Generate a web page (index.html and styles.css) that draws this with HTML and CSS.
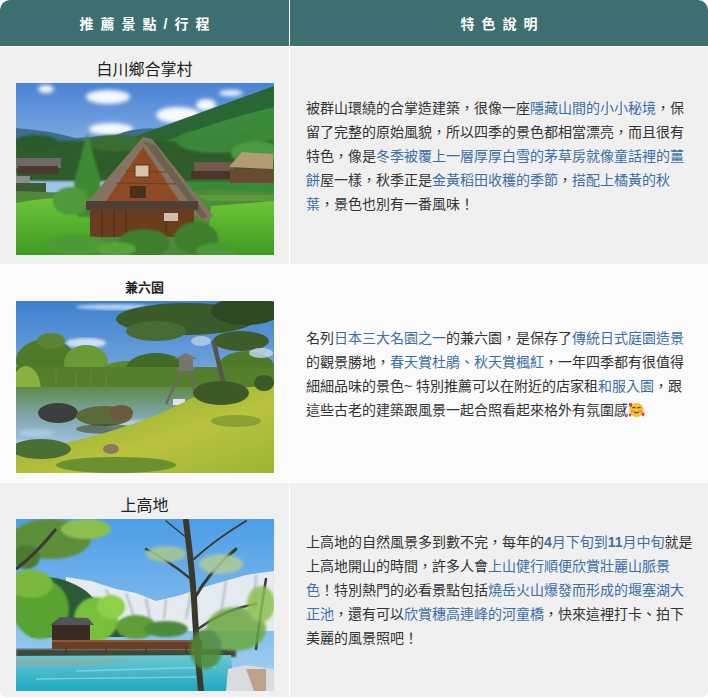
FILE: index.html
```html
<!DOCTYPE html>
<html lang="zh-Hant">
<head>
<meta charset="utf-8">
<title>推薦景點</title>
<link rel="stylesheet" href="styles.css">
</head>
<body>
<div class="table">
  <div class="head">推薦景點/行程</div>
  <div class="head">特色說明</div>

  <div class="place">
    <div class="title">白川鄉合掌村</div>
    <svg class="photo" viewBox="0 0 258 172" width="258" height="172">
      <defs>
        <linearGradient id="s1" x1="0" y1="0" x2="0" y2="1"><stop offset="0" stop-color="#4a82d4"/><stop offset="0.55" stop-color="#9cc1ea"/><stop offset="1" stop-color="#c7dcf0"/></linearGradient>
        <linearGradient id="f1" x1="0" y1="0" x2="0" y2="1"><stop offset="0" stop-color="#6cc438"/><stop offset="1" stop-color="#3f9a22"/></linearGradient>
        <filter id="bl1"><feGaussianBlur stdDeviation="2.2"/></filter>
        <filter id="bl2"><feGaussianBlur stdDeviation="0.8"/></filter>
      </defs>
      <rect width="258" height="172" fill="url(#s1)"/>
      <g fill="#fff" filter="url(#bl1)" opacity="0.95">
        <ellipse cx="92" cy="14" rx="22" ry="7"/>
        <ellipse cx="30" cy="6" rx="8" ry="4"/>
        <ellipse cx="162" cy="32" rx="22" ry="8"/>
        <ellipse cx="190" cy="22" rx="10" ry="6"/>
        <ellipse cx="95" cy="46" rx="22" ry="6"/>
        <ellipse cx="215" cy="10" rx="12" ry="3"/>
      </g>
      <path d="M0 45 Q30 47 60 55 L100 52 Q125 42 150 47 L150 90 L0 90 Z" fill="#3f6d8c"/>
      <path d="M95 62 Q170 35 258 3 L258 120 L95 120 Z" fill="#2a6634"/>
      <path d="M140 62 Q200 38 258 24 L258 120 L140 120 Z" fill="#3a8a3a"/>
      <g filter="url(#bl2)">
        <rect x="0" y="58" width="258" height="40" fill="#2f5c2c"/>
        <ellipse cx="20" cy="60" rx="22" ry="8" fill="#2b5a2b"/>
        <ellipse cx="100" cy="60" rx="30" ry="8" fill="#3a6d33"/>
        <ellipse cx="200" cy="58" rx="40" ry="12" fill="#3b8638"/>
        <ellipse cx="240" cy="70" rx="25" ry="12" fill="#4a9a40"/>
      </g>
      <g>
        <rect x="0" y="75" width="45" height="10" fill="#6f6a66"/>
        <rect x="2" y="83" width="40" height="8" fill="#4a3a30"/>
        <rect x="0" y="93" width="14" height="10" fill="#8b8c90"/>
        <rect x="0" y="100" width="30" height="18" fill="#3d5a34"/>
        <rect x="178" y="79" width="40" height="10" fill="#6e5b4c"/>
        <rect x="175" y="88" width="40" height="8" fill="#4a3528"/>
      </g>
      <path d="M0 108 L110 112 L200 106 L258 110 L258 172 L0 172 Z" fill="#4f8a3a"/>
      <path d="M0 120 Q40 112 72 116 L80 172 L0 172 Z" fill="url(#f1)"/>
      <path d="M195 123 L258 118 L258 172 L190 172 Z" fill="url(#f1)"/>
      <path d="M180 112 L258 112 L258 118 L190 118 Z" fill="#5a9a3c"/>
      <path d="M213 84 L226 69 L257 71 L257 86 Z" fill="#b39c74"/>
      <rect x="214" y="86" width="43" height="14" fill="#6a4a30"/>
      <path d="M71 50 L58 100 L62 134 L86 134 L84 95 Z" fill="#3d8a34" filter="url(#bl2)"/>
      <ellipse cx="55" cy="118" rx="18" ry="14" fill="#4f9a3a" filter="url(#bl2)"/>
      <path d="M127 54 L136 56 L197 133 L190 138 L170 128 L74 126 L66 125 Z" fill="#857461"/>
      <path d="M127 58 L139 62 L192 134 L186 136 Z" fill="#6e6051"/>
      <path d="M127 64 L90 118 L166 122 Z" fill="#8e4a24"/>
      <g stroke="#6b3618" stroke-width="0.8">
        <line x1="100" y1="100" x2="160" y2="101"/>
        <line x1="110" y1="88" x2="150" y2="89"/>
      </g>
      <rect x="119" y="82" width="14" height="12" fill="#d6c4a6" stroke="#5a3a22"/>
      <rect x="114" y="103" width="16" height="12" fill="#4a3020"/>
      <rect x="70" y="118" width="112" height="9" fill="#4e4036"/>
      <rect x="74" y="126" width="104" height="28" fill="#6b3d20"/>
      <g stroke="#4a2a14" stroke-width="0.8">
        <line x1="86" y1="127" x2="86" y2="154"/><line x1="98" y1="127" x2="98" y2="154"/><line x1="110" y1="127" x2="110" y2="154"/><line x1="150" y1="127" x2="150" y2="154"/>
      </g>
      <rect x="148" y="130" width="14" height="8" fill="#c9c2b0"/>
      <g fill="#3c7f2c" filter="url(#bl2)">
        <ellipse cx="128" cy="160" rx="26" ry="14"/>
        <ellipse cx="60" cy="162" rx="30" ry="10" fill="#4c9a34"/>
        <ellipse cx="180" cy="155" rx="22" ry="16"/>
        <ellipse cx="200" cy="168" rx="20" ry="8" fill="#4c9a34"/>
        <ellipse cx="100" cy="166" rx="20" ry="7" fill="#55a538"/>
      </g>
    </svg>
  </div>
  <div class="desc">
    <p>被群山環繞的合掌造建築，很像一座<span class="hl">隱藏山間的小小秘境</span>，保留了完整的原始風貌，所以四季的景色都相當漂亮，而且很有特色，像是<span class="hl">冬季被覆上一層厚厚白雪的茅草房就像童話裡的薑餅</span>屋一樣，秋季正是<span class="hl">金黃稻田收穫的季節</span>，<span class="hl">搭配上橘黃的秋葉</span>，景色也別有一番風味！</p>
  </div>

  <div class="place alt">
    <div class="title small">兼六園</div>
    <svg class="photo" viewBox="0 0 258 172" width="258" height="172">
      <defs>
        <linearGradient id="s2" x1="0" y1="0" x2="0" y2="1"><stop offset="0" stop-color="#3d80cf"/><stop offset="1" stop-color="#c2d9ee"/></linearGradient>
        <linearGradient id="g2" x1="0" y1="0" x2="1" y2="1"><stop offset="0" stop-color="#7fa830"/><stop offset="0.6" stop-color="#b9c23e"/><stop offset="1" stop-color="#9cb436"/></linearGradient>
        <linearGradient id="w2" x1="0" y1="0" x2="0" y2="1"><stop offset="0" stop-color="#5f8a4a"/><stop offset="0.5" stop-color="#7ea6a8"/><stop offset="1" stop-color="#9cc0dc"/></linearGradient>
        <filter id="bl3"><feGaussianBlur stdDeviation="1.5"/></filter>
        <filter id="bl4"><feGaussianBlur stdDeviation="0.7"/></filter>
      </defs>
      <rect width="258" height="172" fill="url(#s2)"/>
      <ellipse cx="70" cy="42" rx="20" ry="5" fill="#fff" opacity="0.7" filter="url(#bl3)"/>
      <ellipse cx="100" cy="6" rx="40" ry="3" fill="#fff" opacity="0.6" filter="url(#bl3)"/>
      <g filter="url(#bl4)">
        <ellipse cx="30" cy="60" rx="30" ry="22" fill="#4f7a2a"/>
        <ellipse cx="35" cy="40" rx="14" ry="8" fill="#5b8430"/>
        <ellipse cx="70" cy="62" rx="22" ry="18" fill="#6a9a34"/>
        <ellipse cx="110" cy="72" rx="25" ry="12" fill="#5a8a2e"/>
        <ellipse cx="140" cy="68" rx="30" ry="16" fill="#3f6a26"/>
        <ellipse cx="230" cy="70" rx="30" ry="20" fill="#4f7a2a"/>
        <rect x="0" y="66" width="258" height="24" fill="#557f2c"/>
        <ellipse cx="10" cy="90" rx="15" ry="25" fill="#8ab040"/>
      </g>
      <g stroke="#8a7a5a" stroke-width="1" opacity="0.8">
        <line x1="40" y1="70" x2="40" y2="88"/><line x1="60" y1="72" x2="60" y2="88"/><line x1="75" y1="70" x2="75" y2="88"/><line x1="90" y1="74" x2="90" y2="88"/>
      </g>
      <g filter="url(#bl4)">
        <ellipse cx="170" cy="18" rx="70" ry="16" fill="#3a5a2a"/>
        <ellipse cx="230" cy="10" rx="35" ry="14" fill="#2e4a24"/>
        <ellipse cx="140" cy="30" rx="30" ry="10" fill="#4a6a30"/>
        <ellipse cx="225" cy="40" rx="28" ry="10" fill="#3c5c2a"/>
        <ellipse cx="185" cy="40" rx="10" ry="5" fill="#c8d8e8" opacity="0.7"/>
        <ellipse cx="245" cy="52" rx="12" ry="5" fill="#c8d8e8" opacity="0.8"/>
      </g>
      <path d="M195 40 Q200 60 205 82 L210 82 Q204 60 200 40 Z" fill="#5a5448"/>
      <path d="M0 86 L190 86 L200 130 Q120 148 0 138 Z" fill="url(#w2)"/>
      <ellipse cx="130" cy="125" rx="40" ry="6" fill="#b7d2ea" opacity="0.9" filter="url(#bl3)"/>
      <ellipse cx="20" cy="132" rx="18" ry="4" fill="#a8c8e4" filter="url(#bl3)"/>
      <g filter="url(#bl4)">
        <ellipse cx="42" cy="112" rx="20" ry="10" fill="#3e3e3a"/>
        <ellipse cx="88" cy="115" rx="28" ry="10" fill="#5a6a38"/>
        <ellipse cx="105" cy="112" rx="12" ry="8" fill="#6b5a40"/>
        <ellipse cx="90" cy="128" rx="30" ry="5" fill="#3f4a30" opacity="0.6"/>
      </g>
      <g fill="#77766c">
        <path d="M158 58 L170 52 L182 58 Z"/>
        <rect x="163" y="58" width="14" height="8"/>
        <path d="M160 66 L180 66 L178 70 L162 70 Z"/>
      </g>
      <path d="M166 70 L150 103 M174 70 L180 100" stroke="#6a6a62" stroke-width="2.5" fill="none"/>
      <rect x="157" y="98" width="12" height="6" fill="#dfe4ea"/>
      <path d="M150 110 Q170 100 190 90 L258 84 L258 172 L0 172 L0 150 Q80 140 150 110 Z" fill="url(#g2)"/>
      <g filter="url(#bl4)">
        <ellipse cx="205" cy="92" rx="28" ry="12" fill="#3e5a28"/>
        <ellipse cx="248" cy="82" rx="10" ry="8" fill="#3a5a28"/>
        <ellipse cx="25" cy="148" rx="30" ry="10" fill="#4a7030"/>
        <ellipse cx="100" cy="164" rx="60" ry="8" fill="#6a9030"/>
        <ellipse cx="220" cy="120" rx="25" ry="6" fill="#8aa030"/>
        <ellipse cx="95" cy="148" rx="8" ry="5" fill="#8a7a60"/>
      </g>
    </svg>
  </div>
  <div class="desc alt">
    <p>名列<span class="hl">日本三大名園之一</span>的兼六園，是保存了<span class="hl">傳統日式庭園造景</span>的觀景勝地，<span class="hl">春天賞杜鵑、秋天賞楓紅</span>，一年四季都有很值得細細品味的景色~ 特別推薦可以在附近的店家租<span class="hl">和服入園</span>，跟這些古老的建築跟風景一起合照看起來格外有氛圍感<svg class="emoji" viewBox="0 0 20 20" width="17" height="17"><circle cx="10" cy="10.5" r="8.5" fill="#f8c23a"/><path d="M5 8.5 Q7 6.5 9 8.5 M11 8.5 Q13 6.5 15 8.5" stroke="#6b3a10" stroke-width="1.2" fill="none"/><path d="M7 12.5 Q10 15.5 13 12.5" stroke="#6b3a10" stroke-width="1.2" fill="none"/><ellipse cx="5" cy="12" rx="1.8" ry="1.2" fill="#f08a5a"/><ellipse cx="15" cy="12" rx="1.8" ry="1.2" fill="#f08a5a"/><path d="M1 4 Q1 2 3 2.5 Q5 2 5 4 Q5 6 3 7.5 Q1 6 1 4 Z" fill="#e8304a"/><path d="M16 15 Q16 13 17.7 13.5 Q19.5 13 19.5 15 Q19.5 17 17.7 18.5 Q16 17 16 15 Z" fill="#e8304a"/><path d="M1 16 Q1 14.5 2.5 15 Q4 14.5 4 16 Q4 17.5 2.5 18.7 Q1 17.5 1 16 Z" fill="#e8304a"/></svg></p>
  </div>

  <div class="place last">
    <div class="title">上高地</div>
    <svg class="photo" viewBox="0 0 258 172" width="258" height="172">
      <defs>
        <linearGradient id="s3" x1="0" y1="0" x2="0" y2="1"><stop offset="0" stop-color="#4d9de6"/><stop offset="1" stop-color="#a9d2f2"/></linearGradient>
        <linearGradient id="w3" x1="0" y1="0" x2="0" y2="1"><stop offset="0" stop-color="#6cc8d4"/><stop offset="1" stop-color="#1ea8c0"/></linearGradient>
        <filter id="bl5"><feGaussianBlur stdDeviation="0.8"/></filter>
        <filter id="bl6"><feGaussianBlur stdDeviation="1.6"/></filter>
      </defs>
      <rect width="258" height="172" fill="url(#s3)"/>
      <path d="M50 58 L75 62 L100 70 L120 74 L140 82 L165 76 L195 66 L230 56 L258 52 L258 112 L50 112 Z" fill="#e4eaf0"/>
      <g stroke="#8a98a8" stroke-width="1.4" opacity="0.8" filter="url(#bl5)">
        <path d="M90 70 L100 95 M110 74 L118 98 M130 80 L134 100 M150 80 L148 100 M175 74 L170 100 M210 62 L205 95 M240 56 L238 90"/>
      </g>
      <path d="M15 58 Q45 55 70 72 L95 95 L110 118 L15 118 Z" fill="#2c5a36"/>
      <g filter="url(#bl5)">
        <ellipse cx="80" cy="100" rx="22" ry="22" fill="#78c03a"/>
        <ellipse cx="95" cy="88" rx="14" ry="12" fill="#8ed046"/>
        <ellipse cx="120" cy="108" rx="20" ry="12" fill="#5e9e38"/>
        <ellipse cx="25" cy="90" rx="28" ry="30" fill="#5aa232"/>
        <ellipse cx="15" cy="65" rx="22" ry="14" fill="#7ab83a"/>
        <ellipse cx="35" cy="20" rx="40" ry="20" fill="#5d8f3a"/>
        <ellipse cx="70" cy="10" rx="25" ry="10" fill="#8cbf50"/>
        <ellipse cx="10" cy="38" rx="14" ry="12" fill="#4c7a32"/>
        <ellipse cx="150" cy="110" rx="22" ry="8" fill="#4e8a3a"/>
      </g>
      <path d="M0 50 Q20 35 40 10" stroke="#3c3a30" stroke-width="3" fill="none"/>
      <rect x="36" y="105" width="38" height="22" fill="#3b2a1f"/>
      <path d="M34 106 L44 98 L72 99 L78 106 Z" fill="#54545a"/>
      <rect x="0" y="130" width="220" height="8" fill="#3f4a36" filter="url(#bl5)"/>
      <rect x="36" y="123" width="150" height="7" fill="#6e3e24"/>
      <rect x="36" y="121" width="150" height="2" fill="#8a5a3a"/>
      <g stroke="#5a3018" stroke-width="1.2"><line x1="50" y1="128" x2="50" y2="134"/><line x1="90" y1="128" x2="90" y2="134"/><line x1="130" y1="128" x2="130" y2="134"/><line x1="170" y1="128" x2="170" y2="134"/></g>
      <path d="M0 137 L215 136 L218 172 L0 172 Z" fill="url(#w3)"/>
      <path d="M0 141 L120 140 L80 146 L0 147 Z" fill="#9aa89a" opacity="0.6"/>
      <path d="M60 152 L200 148 M20 160 L180 158" stroke="#8fdde6" stroke-width="1.5" opacity="0.7"/>
      <g stroke="#3a3a2c" fill="none" stroke-linecap="round">
        <path d="M185 172 Q180 120 178 80 Q176 50 170 2" stroke-width="6"/>
        <path d="M178 80 Q195 50 220 30" stroke-width="3"/>
        <path d="M175 60 Q150 40 130 30" stroke-width="2.5"/>
        <path d="M178 40 Q200 20 230 2" stroke-width="2"/>
        <path d="M172 20 Q160 10 150 2" stroke-width="1.5"/>
        <path d="M182 110 Q210 90 240 85" stroke-width="2.5"/>
        <path d="M240 130 Q245 90 250 60" stroke-width="2.5"/>
      </g>
      <g filter="url(#bl6)" opacity="0.85">
        <ellipse cx="150" cy="35" rx="20" ry="8" fill="#a8c890"/>
        <ellipse cx="205" cy="45" rx="22" ry="10" fill="#b0cc98"/>
        <ellipse cx="220" cy="110" rx="30" ry="22" fill="#6aa840"/>
        <ellipse cx="245" cy="85" rx="14" ry="18" fill="#8cc050"/>
        <ellipse cx="190" cy="130" rx="16" ry="20" fill="#4f8a34"/>
      </g>
      <path d="M212 150 L230 146 L258 150 L258 172 L210 172 Z" fill="#d8dcde"/>
      <path d="M230 150 L250 150 L250 172 L238 172 Z" fill="#b08a6a" opacity="0.7"/>
    </svg>
  </div>
  <div class="desc">
    <p>上高地的自然風景多到數不完，每年的<span class="hl"><b>4</b>月下旬到<b>11</b>月中旬</span>就是上高地開山的時間，許多人會<span class="hl">上山健行順便欣賞壯麗山脈景色</span>！特別熱門的必看景點包括<span class="hl">燒岳火山爆發而形成的堰塞湖大正池</span>，還有可以<span class="hl">欣賞穗高連峰的河童橋</span>，快來這裡打卡、拍下美麗的風景照吧！</p>
  </div>
</div>
</body>
</html>
```

FILE: styles.css
```css
html, body {
  margin: 0;
  padding: 0;
  background: #ffffff;
}

body {
  font-family: "Liberation Sans", "Noto Sans CJK TC", sans-serif;
  color: #333333;
}

.table {
  width: 708px;
  display: grid;
  grid-template-columns: 289px 418px;
  column-gap: 1px;
  row-gap: 1px;
  border-radius: 10px 10px 6px 6px;
  overflow: hidden;
}

.head {
  height: 46px;
  background: #3e6f70;
  color: #ffffff;
  font-weight: 700;
  font-size: 14px;
  letter-spacing: 7px;
  text-indent: 7px;
  display: flex;
  align-items: center;
  justify-content: center;
}

.place {
  background: #f0f0f0;
  padding: 10px 0 9px;
  display: flex;
  flex-direction: column;
  align-items: center;
}

.place.alt,
.desc.alt {
  background: #fbfbfb;
}

.place.last {
  padding-bottom: 6px;
}

.title {
  height: 26px;
  line-height: 26px;
  font-size: 16px;
  color: #222222;
}

.title.small {
  font-size: 13px;
  font-weight: 700;
}

.photo {
  display: block;
  width: 258px;
  height: 172px;
}

.desc {
  background: #f0f0f0;
  padding: 0 13px 0 16px;
  display: flex;
  align-items: center;
}

.desc p {
  margin: 0;
  font-size: 14px;
  line-height: 24px;
  color: #333333;
}

.hl {
  color: #3c6ea6;
}

.hl b {
  font-weight: 700;
}

.emoji {
  vertical-align: -3px;
}
```
